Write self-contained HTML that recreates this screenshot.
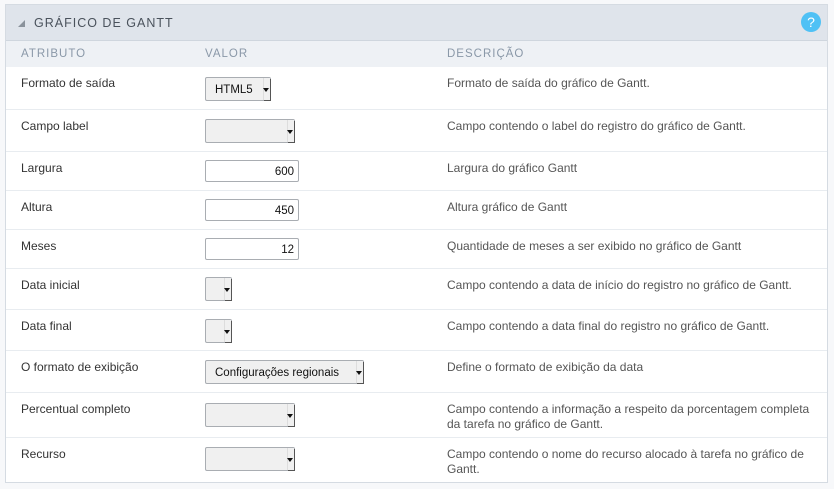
<!DOCTYPE html>
<html><head><meta charset="utf-8"><style>
*{box-sizing:border-box;margin:0;padding:0}
body{width:834px;height:489px;background:#f7f8fa;font-family:"Liberation Sans",sans-serif;position:relative;overflow:hidden}
.panel{position:absolute;left:5px;top:4px;width:823px;height:479px;border:1px solid #d5dbe2;background:#fff}
.hdr{position:absolute;left:0;top:0;width:100%;height:36px;background:#dfe4eb;border-bottom:1px solid #cfd6de}
.hdr .t{position:absolute;left:28px;top:11px;font-size:12.5px;letter-spacing:1px;color:#4a525c}
.hdr .tri{position:absolute;left:12px;top:15px;width:0;height:0;border-left:7px solid transparent;border-bottom:7px solid #8a929b}
.q{position:absolute;right:6px;top:7px;width:20px;height:20px;border-radius:50%;background:#4fc1f5;color:#fff;font-size:14px;text-align:center;line-height:20px}
.ch{position:absolute;left:0;top:36px;width:100%;height:26px;background:#eef1f5}
.ch span{position:absolute;top:7px;font-size:11.5px;letter-spacing:1px;color:#8a98a8}
.row{position:absolute;left:0;width:100%;border-top:1px solid #e8ecf0}
.row .a,.row .d{position:absolute;top:9px;font-size:12px;color:#333}
.row .a{left:15px}.row .d{left:441px;color:#555;line-height:15px;width:378px}
.sel{position:absolute;left:199px;top:10px;height:24px;background:#f0f0f0;border:1px solid #a9adb2;border-radius:2px;font-size:11.5px;color:#111;padding:6px 0 0 9px}
.sel:after{content:"";position:absolute;right:0;top:0;width:6px;height:100%;border-left:1px solid #ddd;background:#f0f0f0;box-shadow:1px 1px 0 #555}
.sel i{position:absolute;right:1px;top:10px;border-left:3px solid transparent;border-right:3px solid transparent;border-top:4px solid #111;z-index:2}
.inp{position:absolute;left:199px;top:8px;width:94px;height:22px;border:1px solid #a9adb2;border-radius:2px;font-size:11.5px;text-align:right;padding:5px 4px 0 0;color:#111}
</style></head><body>
<div class="panel">
<div class="hdr"><div class="tri"></div><div class="t">GRÁFICO DE GANTT</div><div class="q">?</div></div>
<div class="ch"><span style="left:15px">ATRIBUTO</span><span style="left:199px">VALOR</span><span style="left:441px">DESCRIÇÃO</span></div>
<div class="row" style="top:62px;height:42px;border-top:none"><div class="a">Formato de saída</div><div class="sel" style="width:66px">HTML5<i></i></div><div class="d">Formato de saída do gráfico de Gantt.</div></div>
<div class="row" style="top:104px;height:42px"><div class="a">Campo label</div><div class="sel" style="width:90px;top:9px"><i></i></div><div class="d">Campo contendo o label do registro do gráfico de Gantt.</div></div>
<div class="row" style="top:146px;height:39px"><div class="a">Largura</div><div class="inp">600</div><div class="d">Largura do gráfico Gantt</div></div>
<div class="row" style="top:185px;height:39px"><div class="a">Altura</div><div class="inp">450</div><div class="d">Altura gráfico de Gantt</div></div>
<div class="row" style="top:224px;height:39px"><div class="a">Meses</div><div class="inp">12</div><div class="d">Quantidade de meses a ser exibido no gráfico de Gantt</div></div>
<div class="row" style="top:263px;height:41px"><div class="a">Data inicial</div><div class="sel" style="width:27px;top:8px"><i></i></div><div class="d">Campo contendo a data de início do registro no gráfico de Gantt.</div></div>
<div class="row" style="top:304px;height:41px"><div class="a">Data final</div><div class="sel" style="width:27px;top:9px"><i></i></div><div class="d">Campo contendo a data final do registro no gráfico de Gantt.</div></div>
<div class="row" style="top:345px;height:42px"><div class="a">O formato de exibição</div><div class="sel" style="width:159px;top:9px">Configurações regionais<i></i></div><div class="d">Define o formato de exibição da data</div></div>
<div class="row" style="top:387px;height:45px"><div class="a">Percentual completo</div><div class="sel" style="width:90px;top:10px"><i></i></div><div class="d">Campo contendo a informação a respeito da porcentagem completa da tarefa no gráfico de Gantt.</div></div>
<div class="row" style="top:432px;height:46px"><div class="a">Recurso</div><div class="sel" style="width:90px;top:9px"><i></i></div><div class="d">Campo contendo o nome do recurso alocado à tarefa no gráfico de Gantt.</div></div>
</div>
</body></html>
